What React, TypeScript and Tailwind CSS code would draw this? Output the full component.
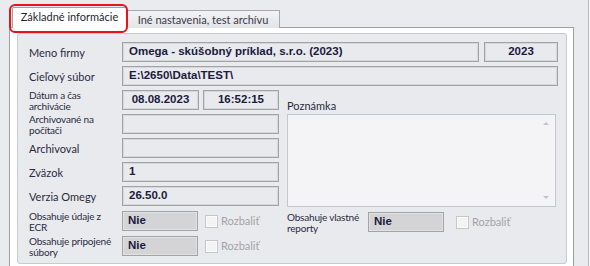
import React from "react";

const labelCls = "w-[93px] shrink-0 whitespace-nowrap text-[11px] text-[#2a2a40] leading-none";
const smallLabelCls =
  "w-[93px] shrink-0 whitespace-nowrap text-[10px] tracking-[-0.2px] leading-[11px] text-[#2a2a40] pt-[1px]";
const valueFont = "font-['Liberation_Sans',Arial,sans-serif] text-[11.5px] font-bold text-[#1b1b3c]";
const fieldCls = `h-[20px] border border-[#a3a3a3] shadow-[inset_0_0_0_1px_#d6d7dc] bg-[#e9eaee] flex items-center px-[6px] ${valueFont}`;
const grayField = `h-[20px] border border-[#a3a3a3] shadow-[inset_0_0_0_1px_#e2e2e2] bg-[#d4d4d6] flex items-center px-[5px] ${valueFont}`;

const Check = ({ label }: { label: string }) => (
  <div className="flex items-center">
    <div className="w-[13px] h-[13px] border border-[#c6c6c6] bg-[#f3f3f4] shadow-[inset_0_0_0_1px_#fbfbfb]" />
    <span className="ml-[3px] text-[11px] text-[#a3a3a8]">{label}</span>
  </div>
);

const Row = ({ label, small, children }: { label: React.ReactNode; small?: boolean; children?: React.ReactNode }) => (
  <div className="flex items-center h-[20px]">
    <div className={small ? smallLabelCls : labelCls}>{label}</div>
    {children}
  </div>
);

const App: React.FC = () => {
  return (
    <div className="w-[590px] h-[266px] bg-[#eaebef] flex overflow-hidden font-['Lato',sans-serif]">
      <div className="w-[588px] relative">
        {/* tabs */}
        <div className="flex items-end pt-[7px] pl-[12px] -mb-px">
          <div className="relative z-10 h-[21px] w-[115px] bg-white border border-b-0 border-[#a0a0a0] rounded-t-[2px] flex items-center justify-center pb-[1px] whitespace-nowrap text-[11px] text-[#1f1f2e]">
            Základné informácie
          </div>
          <div className="h-[18px] w-[153px] bg-gradient-to-b from-[#f3f3f5] to-[#e3e4e8] border border-b-0 border-l-0 border-[#a8a8a8] flex items-center justify-center pt-[1px] whitespace-nowrap text-[11px] text-[#3a3a48]">
            Iné nastavenia, test archívu
          </div>
        </div>

        {/* tab page */}
        <div className="ml-[9px] w-[565px] h-[240px] bg-white border border-b-0 border-[#a0a0a0] pt-[5px] pl-[7px]">
          <div className="w-[550px] h-[231px] bg-[#e9eaee] border border-[#c9cacf] rounded-[3px] pt-[8px] pl-[11px] flex flex-col gap-[4px]">
            <Row label="Meno firmy">
              <div className={`${fieldCls} w-[357px]`}>Omega - skúšobný príklad, s.r.o. (2023)</div>
              <div className={`${fieldCls} w-[74px] ml-[5px] justify-center`}>2023</div>
            </Row>
            <Row label="Cieľový súbor">
              <div className={`${fieldCls} w-[436px]`}>E:\2650\Data\TEST\</div>
            </Row>

            <div className="flex">
              <div className="flex flex-col gap-[4px]">
                <Row small label={<>Dátum a čas<br />archivácie</>}>
                  <div className={`${fieldCls} w-[77px] justify-center`}>08.08.2023</div>
                  <div className={`${fieldCls} w-[76px] ml-[4px] justify-center`}>16:52:15</div>
                </Row>
                <Row small label={<>Archivované na<br />počítači</>}>
                  <div className={`${fieldCls} w-[157px]`} />
                </Row>
                <Row label="Archivoval">
                  <div className={`${fieldCls} w-[157px]`} />
                </Row>
                <Row label="Zväzok">
                  <div className={`${fieldCls} w-[157px]`}>1</div>
                </Row>
                <Row label="Verzia Omegy">
                  <div className={`${fieldCls} w-[157px]`}>26.50.0</div>
                </Row>
              </div>

              <div className="ml-[8px] flex flex-col w-[269px]">
                <div className="h-[24px] flex items-end pb-[3px] text-[11px] text-[#2a2a40] leading-none">Poznámka</div>
                <div className="h-[93px] bg-[#f4f4f7] border border-[#c6c7cc] relative">
                  <div className="absolute right-[6px] top-[7px] w-0 h-0 border-l-[3px] border-r-[3px] border-b-[3px] border-l-transparent border-r-transparent border-b-[#c4c4c8]" />
                  <div className="absolute right-[6px] bottom-[7px] w-0 h-0 border-l-[3px] border-r-[3px] border-t-[3px] border-l-transparent border-r-transparent border-t-[#c4c4c8]" />
                </div>
              </div>
            </div>

            <div className="flex">
              <div className="w-[258px] shrink-0">
                <Row small label={<>Obsahuje údaje z<br />ECR</>}>
                  <div className={`${grayField} w-[76px]`}>Nie</div>
                  <div className="ml-[7px]">
                    <Check label="Rozbaliť" />
                  </div>
                </Row>
              </div>
              <div className="flex items-center h-[20px] mt-[1px]">
                <div className="w-[81px] shrink-0 whitespace-nowrap text-[10px] tracking-[-0.2px] leading-[11px] text-[#2a2a40] pt-[1px]">
                  Obsahuje vlastné
                  <br />
                  reporty
                </div>
                <div className={`${grayField} w-[76px]`}>Nie</div>
                <div className="ml-[12px]">
                  <Check label="Rozbaliť" />
                </div>
              </div>
            </div>

            <Row small label={<>Obsahuje pripojené<br />súbory</>}>
              <div className={`${grayField} w-[76px]`}>Nie</div>
              <div className="ml-[7px]">
                <Check label="Rozbaliť" />
              </div>
            </Row>
          </div>
        </div>

        {/* annotation */}
        <div className="absolute left-[9px] top-[4px] w-[119px] h-[29px] border-[2px] border-[#e3141c] rounded-[6px] z-20" />
      </div>
      <div className="w-px h-full bg-[#b9bac1]" />
      <div className="w-px h-full bg-[#f6f6f8]" />
    </div>
  );
};

export default App;
